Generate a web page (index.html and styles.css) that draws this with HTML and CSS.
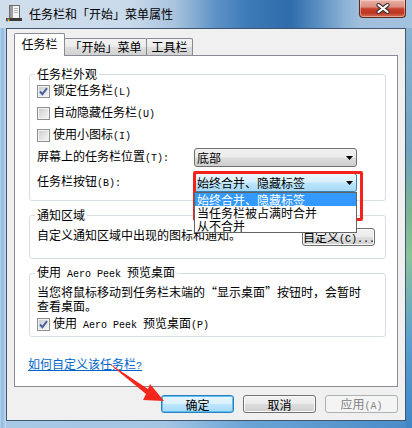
FILE: index.html
```html
<!DOCTYPE html>
<html lang="zh-CN">
<head>
<meta charset="utf-8">
<title>任务栏和「开始」菜单属性</title>
<link rel="stylesheet" href="styles.css">
</head>
<body>
<div class="window">
  <div class="titlebar">
    <svg class="app-icon" width="16" height="17" viewBox="0 0 16 17">
      <rect x="3.5" y="0.5" width="10" height="13" fill="#f4f4f4" stroke="#6d6d6d"/>
      <rect x="4" y="1" width="3" height="12" fill="#9c9c9c"/>
      <rect x="8" y="3" width="4" height="1" fill="#b8b8b8"/>
      <rect x="8" y="5" width="4" height="1" fill="#b8b8b8"/>
      <rect x="8" y="7" width="4" height="1" fill="#b8b8b8"/>
      <rect x="0" y="13" width="16" height="3" fill="#3b3b3b"/>
      <rect x="0.5" y="13.5" width="1.5" height="1.5" fill="#e8452c"/>
      <rect x="2" y="13.5" width="1.5" height="1.5" fill="#5fb336"/>
      <rect x="0.5" y="15" width="1.5" height="1.5" fill="#2a7be0"/>
      <rect x="2" y="15" width="1.5" height="1.5" fill="#f4c20d"/>
    </svg>
    <span class="title">任务栏和「开始」菜单属性</span>
    <div class="close">
      <svg width="14" height="11" viewBox="0 0 14 11">
        <path d="M2.5 2 L11.5 9 M11.5 2 L2.5 9" stroke="#3a3030" stroke-width="4.2" stroke-linecap="round"/>
        <path d="M2.5 2 L11.5 9 M11.5 2 L2.5 9" stroke="#ffffff" stroke-width="2.2" stroke-linecap="round"/>
      </svg>
    </div>
  </div>

  <div class="client">
    <div class="tabs">
      <div class="tab active">任务栏</div>
      <div class="tab tab-start">「开始」菜单</div>
      <div class="tab tab-tools">工具栏</div>
    </div>

    <div class="panel">
      <fieldset class="group group-look">
        <legend>任务栏外观</legend>
        <div class="checks">
          <div class="check">
            <span class="cb"><svg width="11" height="11" viewBox="0 0 11 11"><path d="M2 5.5 L4.4 8.2 L9 2.2" fill="none" stroke="#4a5f98" stroke-width="1.9"/></svg></span>
            <span>锁定任务栏<span class="en">(L)</span></span>
          </div>
          <div class="check">
            <span class="cb"></span>
            <span>自动隐藏任务栏<span class="en">(U)</span></span>
          </div>
          <div class="check">
            <span class="cb"></span>
            <span>使用小图标<span class="en">(I)</span></span>
          </div>
        </div>
        <div class="field first">
          <span>屏幕上的任务栏位置<span class="en">(T):</span></span>
          <div class="combo">
            <span>底部</span>
            <svg class="arrow" width="7" height="4" viewBox="0 0 7 4"><polygon points="0,0 7,0 3.5,4" fill="#000"/></svg>
          </div>
        </div>
        <div class="field second">
          <span>任务栏按钮<span class="en">(B):</span></span>
          <div class="combo open">
            <span>始终合并、隐藏标签</span>
            <svg class="arrow" width="7" height="4" viewBox="0 0 7 4"><polygon points="0,0 7,0 3.5,4" fill="#000"/></svg>
            <ul class="droplist">
              <li class="sel">始终合并、隐藏标签</li>
              <li>当任务栏被占满时合并</li>
              <li>从不合并</li>
            </ul>
          </div>
        </div>
      </fieldset>

      <fieldset class="group group-notify">
        <legend>通知区域</legend>
        <div class="notify-row">
          <span class="desc">自定义通知区域中出现的图标和通知。</span>
          <button class="btn btn-custom" type="button">自定义<span class="en">(C)...</span></button>
        </div>
      </fieldset>

      <fieldset class="group group-peek">
        <legend>使用<span class="en"> Aero Peek </span>预览桌面</legend>
        <p class="peek-desc">当您将鼠标移动到任务栏末端的“显示桌面”按钮时，会暂时<br>查看桌面。</p>
        <div class="check">
          <span class="cb"><svg width="11" height="11" viewBox="0 0 11 11"><path d="M2 5.5 L4.4 8.2 L9 2.2" fill="none" stroke="#4a5f98" stroke-width="1.9"/></svg></span>
          <span>使用<span class="en"> Aero Peek </span>预览桌面<span class="en">(P)</span></span>
        </div>
      </fieldset>

      <a class="help" href="#">如何自定义该任务栏<span class="en">?</span></a>
    </div>

    <div class="buttons">
      <button class="btn default" type="button">确定</button>
      <button class="btn" type="button">取消</button>
      <button class="btn" type="button" disabled>应用<span class="en">(A)</span></button>
    </div>
  </div>

  <div class="mark-box"></div>
  <svg class="mark-arrow" width="412" height="428" viewBox="0 0 412 428">
    <polygon points="107,362 148,389 150,384 164,401 143,400 146,394" fill="#f3261c"/>
  </svg>
</div>
</body>
</html>
```
FILE: styles.css
```css
* { box-sizing: border-box; }
html, body { margin: 0; padding: 0; }
body {
  width: 412px;
  height: 428px;
  overflow: hidden;
  font-family: "Noto Sans CJK SC", "Noto Sans", sans-serif;
  font-size: 12px;
  color: #000;
  background: #6a9bc8;
}
.en {
  font-family: "Liberation Mono", "DejaVu Sans Mono", monospace;
  font-size: 10px;
}

.window {
  position: relative;
  width: 412px;
  height: 428px;
  display: flex;
  flex-direction: column;
  padding: 0 6px 7px;
  background:
    linear-gradient(90deg, #d0deec 0px, #c9daeb 130px, #a9c3de 175px, #5f93c7 215px, #3a78b6 250px, #2e6cab 290px, #5d91c2 320px, #8db2d6 345px, #9fbfdc 360px, #a3c2de 412px) 0 0 / 100% 28px no-repeat,
    linear-gradient(180deg, #8fb8d6 0%, #6fa3c0 35%, #7cb592 50%, #8ac39c 60%, #5b9fcf 80%, #3f86c6 100%) 100% 0 / 6px 100% no-repeat,
    linear-gradient(90deg, #b9d4ec 0px, #8fb9e0 2px, #a8c9e7 4px, #c3d9ee 6px) 0 0 / 6px 100% no-repeat,
    linear-gradient(90deg, #a7c9e6 0%, #a3c6e5 40%, #6aa4d6 60%, #4a8cc8 100%);
}

.titlebar {
  flex: none;
  height: 28px;
  display: flex;
  align-items: flex-start;
}
.app-icon { flex: none; margin-top: 5px; }
.title {
  margin: 6px 0 0 7px;
  line-height: 16px;
}
.close {
  flex: none;
  margin-left: auto;
  width: 47px;
  height: 18px;
  display: flex;
  align-items: center;
  justify-content: center;
  border: 1px solid #5b2a22;
  border-top: 0;
  border-radius: 0 0 4px 4px;
  background: linear-gradient(180deg, #eab1a6 0%, #dd8e80 40%, #c4412c 52%, #bd3621 75%, #d86d55 100%);
  box-shadow: inset 0 0 0 1px rgba(255, 230, 220, 0.45);
}

.client {
  flex: 1;
  display: flex;
  flex-direction: column;
  border: 1px solid #41566f;
  background: #f0f0f0;
  padding: 4px 7px 0;
}

.tabs {
  flex: none;
  height: 23px;
  display: flex;
  align-items: flex-end;
  position: relative;
  z-index: 1;
}
.tab {
  height: 17px;
  margin: 0 0 1px -1px;
  border: 1px solid #898c95;
  border-bottom: 0;
  border-radius: 2px 2px 0 0;
  background: linear-gradient(180deg, #f3f3f3 0%, #ebebeb 50%, #dedede 51%, #d2d2d2 100%);
  line-height: 16px;
  text-align: center;
  white-space: nowrap;
}
.tab.active {
  width: 51px;
  height: 23px;
  margin: 0;
  background: #fff;
  line-height: 20px;
  position: relative;
  z-index: 2;
}
.tab-start { width: 83px; }
.tab-tools { width: 47px; }

.panel {
  flex: none;
  height: 332px;
  margin-top: -1px;
  border: 1px solid #898c95;
  background: #fff;
  display: flex;
  flex-direction: column;
}

.group {
  margin: 11px 11px 0 14px;
  padding: 0 10px 8px 7px;
  border: 1px solid #d5dfe5;
  border-radius: 3px;
  min-width: 0;
}
.group legend {
  padding: 0 2px;
  margin-left: -2px;
  line-height: 14px;
  white-space: nowrap;
}
.group-notify { margin-top: 7px; padding-bottom: 12px; }
.group-peek { margin-top: 6px; padding-bottom: 1px; }

.checks { margin-top: -1px; }
.check {
  height: 22px;
  display: flex;
  align-items: center;
  gap: 3px;
  line-height: 14px;
  white-space: nowrap;
}
.cb {
  flex: none;
  width: 13px;
  height: 13px;
  border: 1px solid #8e8f8f;
  background: linear-gradient(135deg, #c5c9ce 0%, #e4e5e7 55%, #f6f6f6 100%);
  box-shadow: inset 0 0 0 1px #f3f3f3;
  display: flex;
}

.field {
  display: grid;
  grid-template-columns: 157px 163px;
  align-items: center;
  height: 19px;
  line-height: 14px;
  white-space: nowrap;
}
.field.first { margin-top: 2px; }
.field.second { margin-top: 6px; }

.combo {
  position: relative;
  height: 19px;
  display: flex;
  align-items: center;
  padding: 0 3px 0 2px;
  border: 1px solid #707070;
  border-radius: 3px;
  background: linear-gradient(180deg, #f2f2f2 0%, #ebebeb 48%, #dddddd 52%, #cfcfcf 100%);
  line-height: 14px;
}
.combo.open {
  border-color: #3c7fb1;
  background: linear-gradient(180deg, #eaf6fd 0%, #d9f0fc 48%, #bee6fd 52%, #a7d9f5 100%);
}
.arrow { margin-left: auto; flex: none; }

.droplist {
  position: absolute;
  left: -1px;
  top: 18px;
  width: 163px;
  margin: 0;
  padding: 0;
  list-style: none;
  border: 1px solid #646464;
  background: #fff;
  z-index: 3;
}
.droplist li {
  height: 13px;
  line-height: 13px;
  padding-left: 2px;
  white-space: nowrap;
}
.droplist li.sel { background: #3399ff; color: #fff; }

.notify-row {
  display: flex;
  align-items: flex-start;
  margin-top: 6px;
  line-height: 14px;
  white-space: nowrap;
}
.btn-custom {
  margin-left: auto;
  width: 82px;
  height: 19px;
}

.peek-desc {
  margin: 3px 0 0;
  line-height: 14px;
  white-space: nowrap;
}
.group-peek .check { margin-top: 0; }

.help {
  align-self: flex-start;
  margin: 20px 0 0 13px;
  line-height: 14px;
  color: #0066cc;
  text-decoration: underline;
  white-space: nowrap;
}

.buttons {
  flex: none;
  margin-top: 8px;
  display: flex;
  justify-content: flex-end;
  gap: 9px;
}
.btn {
  width: 73px;
  height: 18px;
  padding: 0;
  font-family: inherit;
  font-size: 12px;
  line-height: 15px;
  color: #000;
  border: 1px solid #707070;
  border-radius: 3px;
  background: linear-gradient(180deg, #f2f2f2 0%, #ebebeb 48%, #dddddd 52%, #cfcfcf 100%);
  box-shadow: inset 0 0 0 1px #fbfbfb;
  white-space: nowrap;
}
.btn.default {
  border-color: #2c7fc0;
  background: linear-gradient(180deg, #eaf6fd 0%, #d9f0fc 48%, #bee6fd 52%, #a7d9f5 100%);
  box-shadow: inset 0 0 0 1px #5cc0f0;
}
.btn:disabled {
  color: #838383;
  border-color: #adb2b5;
  background: #f4f4f4;
  box-shadow: none;
}

.mark-box {
  position: absolute;
  left: 193px;
  top: 171px;
  width: 170px;
  height: 50px;
  border: 3px solid #f3221b;
  border-radius: 2px;
  pointer-events: none;
}
.mark-arrow {
  position: absolute;
  left: 0;
  top: 0;
  pointer-events: none;
}
```
